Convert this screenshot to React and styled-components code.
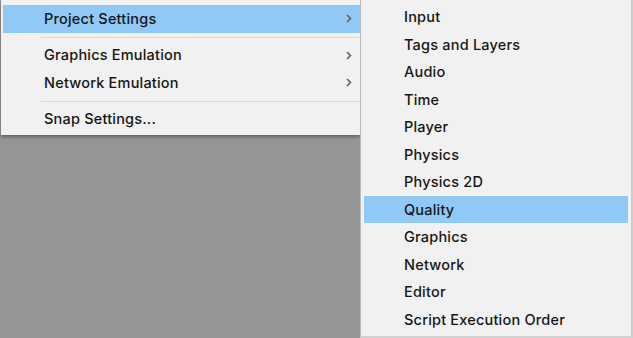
import styled, { createGlobalStyle } from "styled-components";

const GlobalStyle = createGlobalStyle`
  html, body {
    margin: 0;
    padding: 0;
    background: #959595;
    overflow: hidden;
  }
  body {
    font-family: Inter, "Liberation Sans", Arial, sans-serif;
  }
`;

const mainItems = [
  { label: "Project Settings", sub: true, active: true },
  "sep",
  { label: "Graphics Emulation", sub: true },
  { label: "Network Emulation", sub: true },
  "sep",
  { label: "Snap Settings..." },
];

const subItems = [
  "Input",
  "Tags and Layers",
  "Audio",
  "Time",
  "Player",
  "Physics",
  "Physics 2D",
  "Quality",
  "Graphics",
  "Network",
  "Editor",
  "Script Execution Order",
];

const Chevron = () => (
  <svg width="6" height="9" viewBox="0 0 6 9">
    <path d="M1 1l3.5 3.5L1 8" fill="none" stroke="#5a5f66" strokeWidth="1.5" />
  </svg>
);

export default function App() {
  return (
    <>
      <GlobalStyle />
      <Screen>
        <LeftCol>
          <Menu>
            {mainItems.map((it, i) =>
              it === "sep" ? (
                <Separator key={i} />
              ) : (
                <Row key={i} $active={it.active}>
                  <Label>{it.label}</Label>
                  {it.sub && <Chevron />}
                </Row>
              )
            )}
          </Menu>
        </LeftCol>
        <SubMenu>
          {subItems.map((s) => (
            <SubRow key={s} $active={s === "Quality"}>
              {s}
            </SubRow>
          ))}
        </SubMenu>
      </Screen>
    </>
  );
}

const Screen = styled.div`
  display: flex;
  width: 633px;
  height: 338px;
`;

const LeftCol = styled.div`
  width: 360px;
  flex-shrink: 0;
`;

const Menu = styled.div`
  margin-left: 1px;
  background: #f1f1f1;
  padding: 5px 0 2px 2px;
  box-shadow: 0 2px 3px rgba(0, 0, 0, 0.35);
`;

const Row = styled.div`
  display: flex;
  align-items: center;
  justify-content: space-between;
  height: 27.5px;
  padding: 0 8px 0 41px;
  background: ${(p) => (p.$active ? "#90c8f6" : "transparent")};
  color: #161616;
  font-size: 14.5px;
  font-weight: 500;
  letter-spacing: 0.2px;
`;

const Label = styled.span`
  line-height: 1;
`;

const Separator = styled.div`
  height: 9px;
  display: flex;
  align-items: center;
  padding-left: 38px;
  &::after {
    content: "";
    flex: 1;
    height: 1px;
    background: #dadada;
  }
`;

const SubMenu = styled.div`
  width: 273px;
  height: 338px;
  padding: 3px 3px 2px 3px;
  background: #f1f1f1;
  border-left: 1px solid #b9b9b9;
  border-right: 2px solid #cdcdcd;
  border-bottom: 2px solid #d2d2d2;
  box-sizing: border-box;
  flex-shrink: 0;
`;

const SubRow = styled.div`
  display: flex;
  align-items: center;
  height: 27.5px;
  padding-left: 40px;
  background: ${(p) => (p.$active ? "#90c8f6" : "transparent")};
  color: #161616;
  font-size: 14.5px;
  font-weight: 500;
  letter-spacing: 0.2px;
`;
